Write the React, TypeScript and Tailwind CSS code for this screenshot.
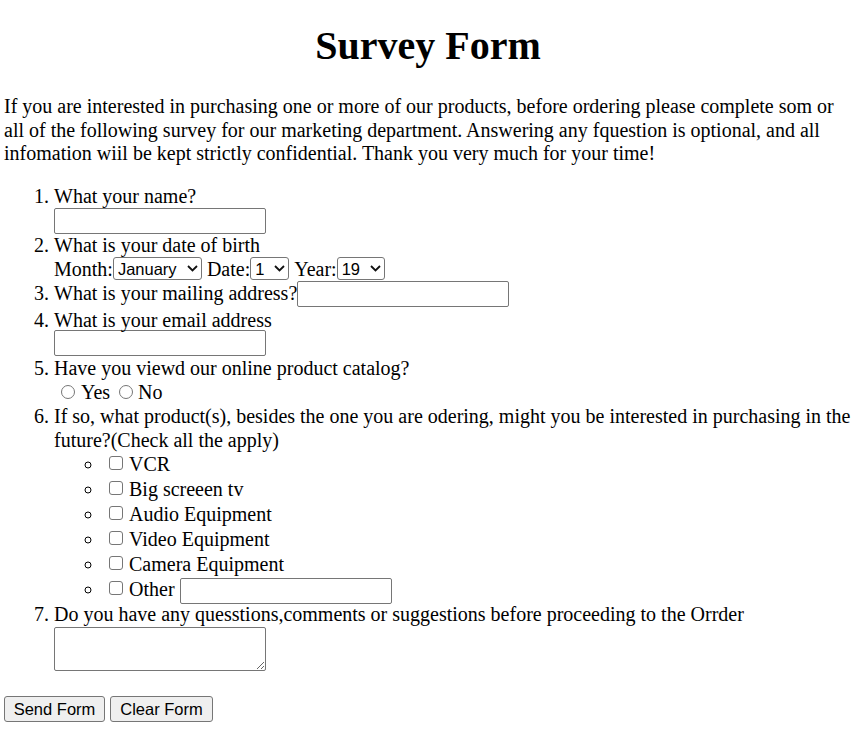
import React from 'react';

const textInput =
  "block h-[26px] w-[212px] rounded-[2px] border border-[#767676] bg-white px-[3px] font-['Liberation_Sans',Arial,sans-serif] text-[16.5px]";
const button =
  "h-[26px] rounded-[3px] border border-[#767676] bg-[#efefef] font-['Liberation_Sans',Arial,sans-serif] text-[16.5px] text-black";
const checkBox =
  'ml-[5px] mr-[6px] inline-block h-[14px] w-[14px] appearance-none rounded-[3px] border border-[#767676] bg-white align-[1px]';
const radio = 'block h-[14px] w-[14px] appearance-none rounded-full border border-[#767676] bg-white';

function SelectBox({ width, options }: { width: string; options: string[] }) {
  return (
    <span className="relative inline-flex h-[23px]">
      <select
        className={`${width} h-[23px] appearance-none rounded-[3px] border border-[#767676] bg-white pl-[4px] font-['Liberation_Sans',Arial,sans-serif] text-[16.5px] leading-[20px]`}
        defaultValue={options[0]}
      >
        {options.map((o) => (
          <option key={o}>{o}</option>
        ))}
      </select>
      <svg
        className="pointer-events-none absolute right-[4px] top-[8px] h-[7px] w-[11px]"
        viewBox="0 0 11 7"
        fill="none"
        stroke="#111"
        strokeWidth="1.8"
      >
        <path d="M1 1l4.5 4.5L10 1" />
      </svg>
    </span>
  );
}

export default function App() {
  const products = ['VCR', 'Big screeen tv', 'Audio Equipment', 'Video Equipment', 'Camera Equipment'];

  return (
    <div className="min-h-[730px] bg-white px-[4px] text-[20px] leading-[24px] text-black font-['Liberation_Serif','Times_New_Roman',serif]">
      <h1 className="pt-[23px] text-center text-[40px] leading-[46px] font-bold">Survey Form</h1>

      <p className="mt-[26px] leading-[23.5px]">
        If you are interested in purchasing one or more of our products, before ordering please complete som or all
        of the following survey for our marketing department. Answering any fquestion is optional, and all infomation
        wiil be kept strictly confidential. Thank you very much for your time!
      </p>

      <form>
        <ol className="mt-[18px] list-decimal pl-[50px]">
          <li>
            <div className="h-[23px] leading-[23px]">What your name?</div>
            <div className="h-[25px]">
              <input type="text" className={textInput} />
            </div>
          </li>

          <li>
            <div className="h-[24px]">What is your date of birth</div>
            <div className="flex h-[24px] items-center">
              <span>Month:</span>
              <SelectBox width="w-[89px]" options={['January', 'February', 'March']} />
              <span className="ml-[5px]">Date:</span>
              <SelectBox width="w-[39px]" options={['1', '2', '3']} />
              <span className="ml-[5px]">Year:</span>
              <SelectBox width="w-[48px]" options={['19', '20']} />
            </div>
          </li>

          <li>
            <div className="flex h-[27px] items-start">
              <span>What is your mailing address?</span>
              <input type="text" className={textInput} />
            </div>
          </li>

          <li>
            <div className="h-[21px] leading-[23px]">What is your email address</div>
            <div className="h-[26px]">
              <input type="text" className={textInput} />
            </div>
          </li>

          <li>
            <div className="h-[23px] leading-[23px]">Have you viewd our online product catalog?</div>
            <div className="flex h-[24px] items-center">
              <input type="radio" name="catalog" className={`${radio} ml-[7px] mr-[6px]`} />
              <span>Yes</span>
              <input type="radio" name="catalog" className={`${radio} ml-[9px] mr-[5px]`} />
              <span>No</span>
            </div>
          </li>

          <li>
            <div>
              If so, what product(s), besides the one you are odering, might you be interested in purchasing in the
              future?(Check all the apply)
            </div>
            <ul className="list-[circle] pl-[50px]">
              {products.map((item) => (
                <li key={item} className="h-[25px] leading-[25px]">
                  <input type="checkbox" className={checkBox} />
                  {item}
                </li>
              ))}
              <li className="h-[25px] leading-[25px]">
                <input type="checkbox" className={checkBox} />
                Other{' '}
                <input
                  type="text"
                  className="inline-block h-[26px] w-[212px] rounded-[2px] border border-[#767676] bg-white px-[3px] align-[-1px] font-['Liberation_Sans',Arial,sans-serif] text-[16.5px]"
                />
              </li>
            </ul>
          </li>

          <li>
            <div className="h-[24px]">Do you have any quesstions,comments or suggestions before proceeding to the Orrder</div>
            <textarea className="mt-[1px] block h-[44px] w-[212px] rounded-[2px] border border-[#767676] bg-white" />
          </li>
        </ol>

        <div className="mt-[25px] flex gap-[5px]">
          <button type="submit" className={`${button} w-[101px]`}>
            Send Form
          </button>
          <button type="reset" className={`${button} w-[103px]`}>
            Clear Form
          </button>
        </div>
      </form>
    </div>
  );
}
